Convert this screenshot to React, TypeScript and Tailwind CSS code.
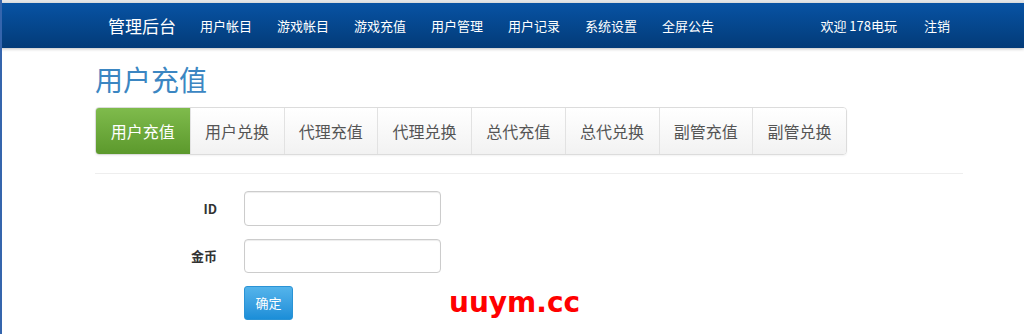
const navItems = ["用户帐目", "游戏帐目", "游戏充值", "用户管理", "用户记录", "系统设置", "全屏公告"];
const tabs = ["用户充值", "用户兑换", "代理充值", "代理兑换", "总代充值", "总代兑换", "副管充值", "副管兑换"];

export default function App() {
  return (
    <div
      className="relative h-[334px] w-[1024px] overflow-hidden bg-white"
      style={{ fontFamily: '"Noto Sans CJK SC", "Noto Sans", sans-serif' }}
    >
      <div className="absolute left-0 top-0 h-full w-[2px] bg-[#3565ad]" />
      <div className="h-[3px] bg-[#e4e6e8]" />
      <div className="h-[45px] bg-gradient-to-b from-[#0853a4] to-[#033b78] shadow-[0_1px_3px_rgba(0,0,0,0.25)]">
        <div className="ml-[95px] flex h-full w-[868px] items-center px-[13px] text-white">
          <span className="mr-[24px] w-[68px] text-[17px]">管理后台</span>
          {navItems.map((item) => (
            <span key={item} className="w-[77px] text-[13px]">
              {item}
            </span>
          ))}
          <span className="ml-auto text-[13px]">欢迎 178电玩</span>
          <span className="ml-[27px] text-[13px]">注销</span>
        </div>
      </div>

      <div className="ml-[95px] w-[868px]">
        <h1 className="mt-[15px] h-[32px] text-[28px] leading-[32px] text-[#3b86c2]">用户充值</h1>
        <div className="mt-[12px] flex h-[48px] w-[752px] overflow-hidden rounded-[4px] border border-[#dcdcdc] shadow-[0_1px_2px_rgba(0,0,0,0.05)]">
          {tabs.map((tab, i) =>
            i === 0 ? (
              <div
                key={tab}
                className="flex w-[94px] items-center justify-center bg-gradient-to-b from-[#7fbb4c] to-[#5c992c] text-[16px] text-white"
              >
                {tab}
              </div>
            ) : (
              <div
                key={tab}
                className="flex w-[94px] items-center justify-center border-l border-[#e2e2e2] bg-gradient-to-b from-white to-[#f2f2f2] text-[16px] text-[#555]"
              >
                {tab}
              </div>
            )
          )}
        </div>
        <div className="mt-[18px] h-px bg-[#eeeeee]" />

        <div className="mt-[17px] flex flex-col gap-[13px]">
          <div className="flex items-center">
            <label className="w-[122px] text-right text-[13px] font-bold text-[#333]">ID</label>
            <input className="ml-[27px] h-[35px] w-[197px] rounded-[4px] border border-[#cccccc] bg-white px-2 shadow-[inset_0_1px_1px_rgba(0,0,0,0.075)] outline-none" />
          </div>
          <div className="flex items-center">
            <label className="w-[122px] text-right text-[13px] font-bold text-[#333]">金币</label>
            <input className="ml-[27px] h-[34px] w-[197px] rounded-[4px] border border-[#cccccc] bg-white px-2 shadow-[inset_0_1px_1px_rgba(0,0,0,0.075)] outline-none" />
          </div>
          <div className="flex items-center">
            <div className="w-[122px]" />
            <button className="ml-[27px] h-[34px] w-[49px] rounded-[3px] border border-[#2a93d5] bg-gradient-to-b from-[#54b4eb] to-[#1a8ed8] text-[13px] text-white">
              确定
            </button>
            <span
              className="ml-[156px] text-[28px] font-bold leading-none text-[#ff0000]"
              style={{ fontFamily: '"DejaVu Sans", sans-serif' }}
            >
              uuym.cc
            </span>
          </div>
        </div>
      </div>
    </div>
  );
}
